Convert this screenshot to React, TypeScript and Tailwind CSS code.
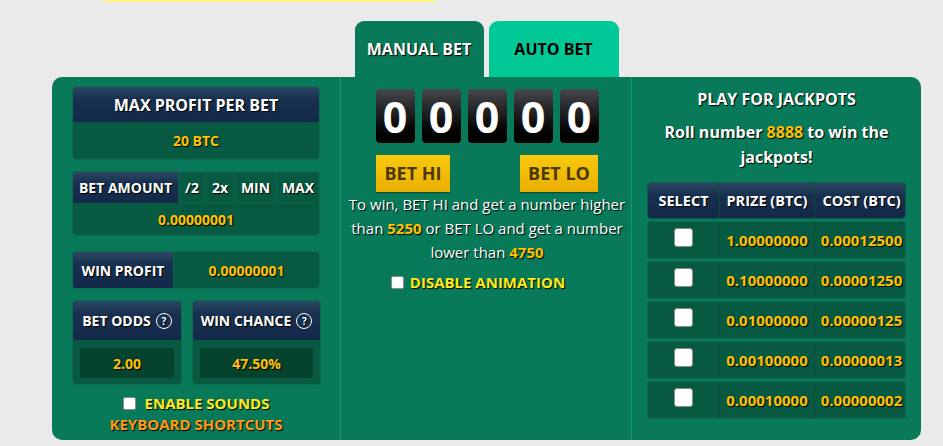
import { useState } from 'react'

const navy = 'bg-linear-to-b from-[#2b4862] via-[#18304f] via-35% to-[#142949]'
const shadow = '[text-shadow:1px_1px_1px_#000]'
const valueBox = 'bg-[#075a41] border border-[#0c6b4e]'

const jackpots = [
	['1.00000000', '0.00012500'],
	['0.10000000', '0.00001250'],
	['0.01000000', '0.00000125'],
	['0.00100000', '0.00000013'],
	['0.00010000', '0.00000002'],
]

const Help = () => (
	<span className="ml-[5px] inline-flex h-[16px] w-[16px] items-center justify-center rounded-full border-[1.5px] border-white text-[10px] leading-none font-bold">
		?
	</span>
)

const Check = ({ size = 'sm' }: { size?: 'sm' | 'lg' }) => {
	const [on, setOn] = useState(false)
	return (
		<input
			type="checkbox"
			checked={on}
			onChange={() => setOn(!on)}
			className={
				size === 'lg'
					? 'h-[19px] w-[19px] appearance-none rounded-[3px] border border-[#8c8c8c] bg-white checked:bg-[#ffc107]'
					: 'h-[13px] w-[13px] appearance-none rounded-[2px] border border-[#8c8c8c] bg-white checked:bg-[#ffc107]'
			}
		/>
	)
}

const OddsBox = ({ label, value }: { label: string; value: string }) => (
	<div className="h-[85px] overflow-hidden rounded-[4px] border border-[#0c6b4e] bg-[#075a41]">
		<div className={`${navy} ${shadow} flex h-[39px] items-center justify-center text-[14px] font-bold text-white`}>
			{label}
			<Help />
		</div>
		<div className="px-[6px] pt-[7px]">
			<div className={`${shadow} flex h-[32px] items-center justify-center rounded-[3px] border border-[#0a5a40] bg-[#05432f] text-[14px] font-bold text-[#ffc107]`}>
				{value}
			</div>
		</div>
	</div>
)

export default function App() {
	const [tab, setTab] = useState<'manual' | 'auto'>('manual')
	const digits = ['0', '0', '0', '0', '0']

	return (
		<div className="min-h-screen bg-[#eaeaea] pb-[6px] font-['Open_Sans',sans-serif]">
			<div className="ml-[105px] h-[2px] w-[330px] bg-[#fff27a]" />

			<div className="mt-[19px] ml-[52px] flex w-[869px] justify-center gap-[5px]">
				<button
					onClick={() => setTab('manual')}
					className={`${shadow} h-[56px] w-[129px] rounded-t-[9px] bg-[#087a5a] text-[16px] font-bold text-white`}
				>
					MANUAL BET
				</button>
				<button
					onClick={() => setTab('auto')}
					className="h-[56px] w-[130px] rounded-t-[9px] bg-[#00c896] text-[16px] font-bold text-black"
				>
					AUTO BET
				</button>
			</div>

			<div className="ml-[52px] grid h-[363px] w-[869px] grid-cols-[289px_291px_289px] rounded-[10px] bg-[#087a5a] text-white">
				{/* left */}
				<div className="border-r border-[#119a70] px-[20px] pt-[9px]">
					<div className="overflow-hidden rounded-[4px] border border-[#0c6b4e]">
						<div className={`${navy} ${shadow} flex h-[35px] items-center justify-center text-[16px] font-bold`}>
							MAX PROFIT PER BET
						</div>
						<div className={`${shadow} flex h-[37px] items-center justify-center bg-[#075a41] text-[14px] font-bold text-[#ffc107]`}>
							20 BTC
						</div>
					</div>

					<div className="mt-[11px] overflow-hidden rounded-[4px] border border-[#0c6b4e] bg-[#075a41]">
						<div className="flex h-[31px] gap-[1px] text-[14px] font-bold">
							<div className={`${navy} ${shadow} flex w-[105px] items-center justify-center`}>BET AMOUNT</div>
							{['/2', '2x', 'MIN', 'MAX'].map((b, i) => (
								<button
									key={b}
									className={`${shadow} flex items-center justify-center border border-[#0a6448] bg-[#075a41] ${['w-[26px]', 'w-[28px]', 'w-[41px]', 'flex-1'][i]}`}
								>
									{b}
								</button>
							))}
						</div>
						<div className={`${shadow} flex h-[32px] items-center justify-center text-[14px] font-bold text-[#ffc107]`}>
							0.00000001
						</div>
					</div>

					<div className="mt-[15px] flex h-[38px] overflow-hidden rounded-[4px] border border-[#0c6b4e] bg-[#075a41]">
						<div className={`${navy} ${shadow} flex w-[100px] items-center justify-center text-[14px] font-bold`}>
							WIN PROFIT
						</div>
						<div className={`${shadow} flex flex-1 items-center justify-center border-l border-[#0c6b4e] text-[14px] font-bold text-[#ffc107]`}>
							0.00000001
						</div>
					</div>

					<div className="mt-[11px] grid grid-cols-[110px_129px] gap-[10px]">
						<OddsBox label="BET ODDS" value="2.00" />
						<OddsBox label="WIN CHANCE" value="47.50%" />
					</div>

					<label className={`${shadow} mt-[8px] flex h-[20px] items-center justify-center gap-[9px] text-[15px] font-bold text-[#ffeb1f]`}>
						<Check />
						ENABLE SOUNDS
					</label>
					<div className={`${shadow} flex h-[22px] items-center justify-center text-[15px] font-bold text-[#ff9a1a]`}>
						KEYBOARD SHORTCUTS
					</div>
				</div>

				{/* middle */}
				<div className="flex flex-col items-center border-r border-[#119a70] pt-[12px] pl-[2px]">
					<div className="flex gap-[7px]">
						{digits.map((d, i) => (
							<div
								key={i}
								className="flex h-[54px] w-[39px] items-center justify-center rounded-[4px] bg-linear-to-b from-[#45484c] via-[#1b1b1c] to-[#000] text-[43px] leading-none font-bold text-white"
							>
								{d}
							</div>
						))}
					</div>
					<div className="mt-[12px] flex w-[222px] justify-between">
						{['BET HI', 'BET LO'].map((b, i) => (
							<button
								key={b}
								className={`h-[37px] ${i === 0 ? 'w-[74px]' : 'w-[78px]'} bg-linear-to-b from-[#f9c90f] to-[#e9ae00] text-[18px] font-bold text-[#4a3906] shadow-[0_1px_1px_rgba(0,0,0,0.35)]`}
							>
								{b}
							</button>
						))}
					</div>
					<p className={`${shadow} text-center text-[15px] leading-[24px]`}>
						To win, BET HI and get a number higher
						<br />
						than <b className="text-[#ffc107]">5250</b> or BET LO and get a number
						<br />
						lower than <b className="text-[#ffc107]">4750</b>
					</p>
					<label className={`${shadow} mt-[8px] mr-[18px] flex h-[20px] items-center gap-[6px] text-[15px] font-bold text-[#ffeb1f]`}>
						<Check />
						DISABLE ANIMATION
					</label>
				</div>

				{/* right */}
				<div className="px-[15px] pt-[10px]">
					<div className={`${shadow} text-center text-[16px] leading-[24px] font-bold`}>PLAY FOR JACKPOTS</div>
					<div className={`${shadow} mt-[9px] px-[8px] text-center text-[16px] leading-[25px] font-bold`}>
						Roll number <span className="text-[#ffc107]">8888</span> to win the jackpots!
					</div>
					<div className="mt-[12px] flex flex-col gap-[2px] text-[15px] font-bold">
						<div className={`${navy} ${shadow} grid h-[37px] grid-cols-[71px_95px_94px] rounded-[4px] border border-[#0c5a45] text-[14.5px]`}>
							<div className="flex items-center justify-center">SELECT</div>
							<div className="flex items-center justify-center border-l border-[#0d4d3d]">PRIZE (BTC)</div>
							<div className="flex items-center justify-center border-l border-[#0d4d3d]">COST (BTC)</div>
						</div>
						{jackpots.map(([prize, cost]) => (
							<div key={prize} className={`${valueBox} grid h-[38px] grid-cols-[71px_95px_94px] rounded-[3px]`}>
								<div className="flex items-center justify-center pb-[6px]">
									<Check size="lg" />
								</div>
								<div className={`${shadow} flex items-center justify-center border-l border-[#0a4b36] text-[#ffc107]`}>{prize}</div>
								<div className={`${shadow} flex items-center justify-center border-l border-[#0a4b36] text-[#ffc107]`}>{cost}</div>
							</div>
						))}
					</div>
				</div>
			</div>
		</div>
	)
}
